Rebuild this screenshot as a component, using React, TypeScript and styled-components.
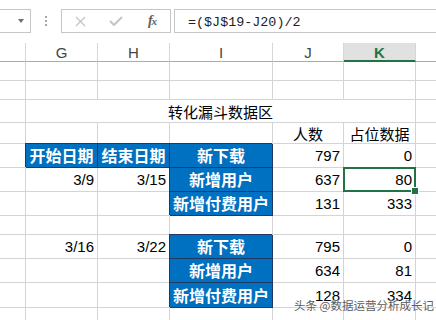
import React from "react";
import styled, { createGlobalStyle, css } from "styled-components";

const GlobalStyle = createGlobalStyle`
  html, body { margin: 0; padding: 0; background: #fff; }
  body { font-family: "Liberation Sans", "Noto Sans CJK SC", sans-serif; }
  * { box-sizing: border-box; }
`;

const Page = styled.div`
  position: relative;
  width: 436px;
  height: 320px;
  overflow: hidden;
  background: #fff;
`;

const FormulaBar = styled.div`
  display: flex;
  align-items: flex-start;
  height: 43px;
  padding-top: 9px;
`;

const NameBox = styled.div`
  width: 31px;
  height: 24px;
  border: 1px solid #c6c6c6;
  border-left: none;
  display: flex;
  align-items: center;
  justify-content: flex-end;
  padding-right: 6px;
`;

const DropArrow = styled.span`
  width: 0;
  height: 0;
  border-left: 3px solid transparent;
  border-right: 3px solid transparent;
  border-top: 4px solid #707070;
`;

const Grip = styled.div`
  width: 30px;
  height: 24px;
  display: flex;
  flex-direction: column;
  align-items: center;
  justify-content: center;
  gap: 2px;
`;

const GripDot = styled.span`
  width: 2px;
  height: 2px;
  background: #a8a8a8;
`;

const FxBox = styled.div`
  width: 110px;
  height: 24px;
  border: 1px solid #c6c6c6;
  display: flex;
  align-items: center;
`;

const FxSlot = styled.div`
  width: 36px;
  height: 22px;
  display: flex;
  align-items: center;
  justify-content: center;
`;

const FxLabel = styled.span`
  font-family: "Liberation Serif", "DejaVu Serif", serif;
  font-style: italic;
  font-weight: bold;
  font-size: 14px;
  color: #606060;
  letter-spacing: -1px;
  & > small {
    font-size: 11px;
  }
`;

const FormulaInput = styled.div`
  flex: 1;
  margin-left: 3px;
  height: 24px;
  border: 1px solid #c6c6c6;
  border-right: none;
  padding-left: 13px;
  padding-top: 2px;
  display: flex;
  align-items: center;
  font-family: "Liberation Mono", monospace;
  font-size: 13.4px;
  color: #222;
`;

const Sheet = styled.div`
  display: grid;
  grid-template-columns: 26px 72px 72px 103px 71px 72px 1fr;
  grid-template-rows: 19px 19px 19px 23px 21px 24px 24px 24px 19px 24px 24px 25px 30px;
`;

const HeaderCell = styled.div<{ $selected?: boolean; $last?: boolean }>`
  border-right: ${(p) => (p.$last ? "none" : "1px solid #d6d6d6")};
  border-bottom: 1px solid #ababab;
  display: flex;
  align-items: center;
  justify-content: center;
  font-size: 15px;
  color: #444;
  ${(p) =>
    p.$selected &&
    css`
      background: #e1e1e1;
      color: #217346;
      font-weight: bold;
      border-bottom: 2px solid #217346;
      padding-top: 1px;
    `}
`;

type Kind = "blank" | "num" | "center" | "blue" | "title";

const Cell = styled.div<{ $kind: Kind; $span?: number; $last?: boolean; $selected?: boolean }>`
  position: relative;
  border-right: ${(p) => (p.$last ? "none" : "1px solid #d4d4d4")};
  border-bottom: 1px solid #d4d4d4;
  display: flex;
  align-items: center;
  font-size: 15px;
  line-height: 17px;
  color: #000;
  white-space: nowrap;
  ${(p) => p.$span && css`grid-column: span ${p.$span};`}
  ${(p) =>
    p.$kind === "num" &&
    css`
      justify-content: flex-end;
      padding-right: 3px;
    `}
  ${(p) =>
    (p.$kind === "center" || p.$kind === "title") &&
    css`
      justify-content: center;
      font-family: "Noto Sans CJK SC", sans-serif;
    `}
  ${(p) =>
    p.$kind === "blue" &&
    css`
      justify-content: center;
      background: #0070c0;
      color: #fff;
      font-family: "Noto Sans CJK SC", sans-serif;
      font-weight: bold;
      font-size: 16px;
      border-right: 1px solid #1f3864;
      border-bottom: 1px solid #1f3864;
      box-shadow: -1px -1px 0 0 #1f3864;
    `}
  ${(p) =>
    p.$selected &&
    css`
      &::after {
        content: "";
        position: absolute;
        left: -1px;
        top: -1px;
        right: -1px;
        bottom: -1px;
        border: 2px solid #217346;
      }
      &::before {
        content: "";
        position: absolute;
        right: -4px;
        bottom: -4px;
        width: 6px;
        height: 6px;
        background: #217346;
        border: 1px solid #fff;
        z-index: 2;
      }
    `}
`;

const Watermark = styled.div`
  position: absolute;
  left: 294px;
  top: 297px;
  font-family: "Noto Sans CJK SC", sans-serif;
  font-size: 11.5px;
  line-height: 16px;
  color: #5c5c5c;
  white-space: nowrap;
  text-shadow: 0 0 2px #fff, 0 0 1px #fff;
`;

type Spec = { t?: string; k?: Kind; span?: number; sel?: boolean };

const B: Spec = { k: "blank" };
const blankRow: Spec[] = [B, B, B, B, B, B, B];

const rows: Spec[][] = [
  blankRow,
  blankRow,
  [B, { t: "转化漏斗数据区", k: "title", span: 5 }, B],
  [B, B, B, B, { t: "人数", k: "center" }, { t: "占位数据", k: "center" }, B],
  [B, { t: "开始日期", k: "blue" }, { t: "结束日期", k: "blue" }, { t: "新下载", k: "blue" }, { t: "797", k: "num" }, { t: "0", k: "num" }, B],
  [B, { t: "3/9", k: "num" }, { t: "3/15", k: "num" }, { t: "新增用户", k: "blue" }, { t: "637", k: "num" }, { t: "80", k: "num", sel: true }, B],
  [B, B, B, { t: "新增付费用户", k: "blue" }, { t: "131", k: "num" }, { t: "333", k: "num" }, B],
  blankRow,
  [B, { t: "3/16", k: "num" }, { t: "3/22", k: "num" }, { t: "新下载", k: "blue" }, { t: "795", k: "num" }, { t: "0", k: "num" }, B],
  [B, B, B, { t: "新增用户", k: "blue" }, { t: "634", k: "num" }, { t: "81", k: "num" }, B],
  [B, B, B, { t: "新增付费用户", k: "blue" }, { t: "128", k: "num" }, { t: "334", k: "num" }, B],
  blankRow,
];

const headers = ["", "G", "H", "I", "J", "K", ""];

export default function App() {
  return (
    <Page>
      <GlobalStyle />
      <FormulaBar>
        <NameBox>
          <DropArrow />
        </NameBox>
        <Grip>
          <GripDot />
          <GripDot />
          <GripDot />
        </Grip>
        <FxBox>
          <FxSlot>
            <svg width="11" height="11" viewBox="0 0 11 11">
              <path d="M1 1 L10 10 M10 1 L1 10" stroke="#c4c4c4" strokeWidth="1.3" fill="none" />
            </svg>
          </FxSlot>
          <FxSlot>
            <svg width="14" height="10" viewBox="0 0 14 10">
              <path d="M1 5 L5 9 L13 1" stroke="#c4c4c4" strokeWidth="2" fill="none" />
            </svg>
          </FxSlot>
          <FxSlot>
            <FxLabel>
              f<small>x</small>
            </FxLabel>
          </FxSlot>
        </FxBox>
        <FormulaInput>=($J$19-J20)/2</FormulaInput>
      </FormulaBar>
      <Sheet>
        {headers.map((h, i) => (
          <HeaderCell key={`h${i}`} $selected={h === "K"} $last={i === headers.length - 1}>
            {h}
          </HeaderCell>
        ))}
        {rows.map((row, r) =>
          row.map((c, i) => (
            <Cell
              key={`${r}-${i}`}
              $kind={c.k ?? "blank"}
              $span={c.span}
              $last={i === row.length - 1}
              $selected={c.sel}
            >
              {c.t}
            </Cell>
          ))
        )}
      </Sheet>
      <Watermark>头条 @数据运营分析成长记</Watermark>
    </Page>
  );
}
